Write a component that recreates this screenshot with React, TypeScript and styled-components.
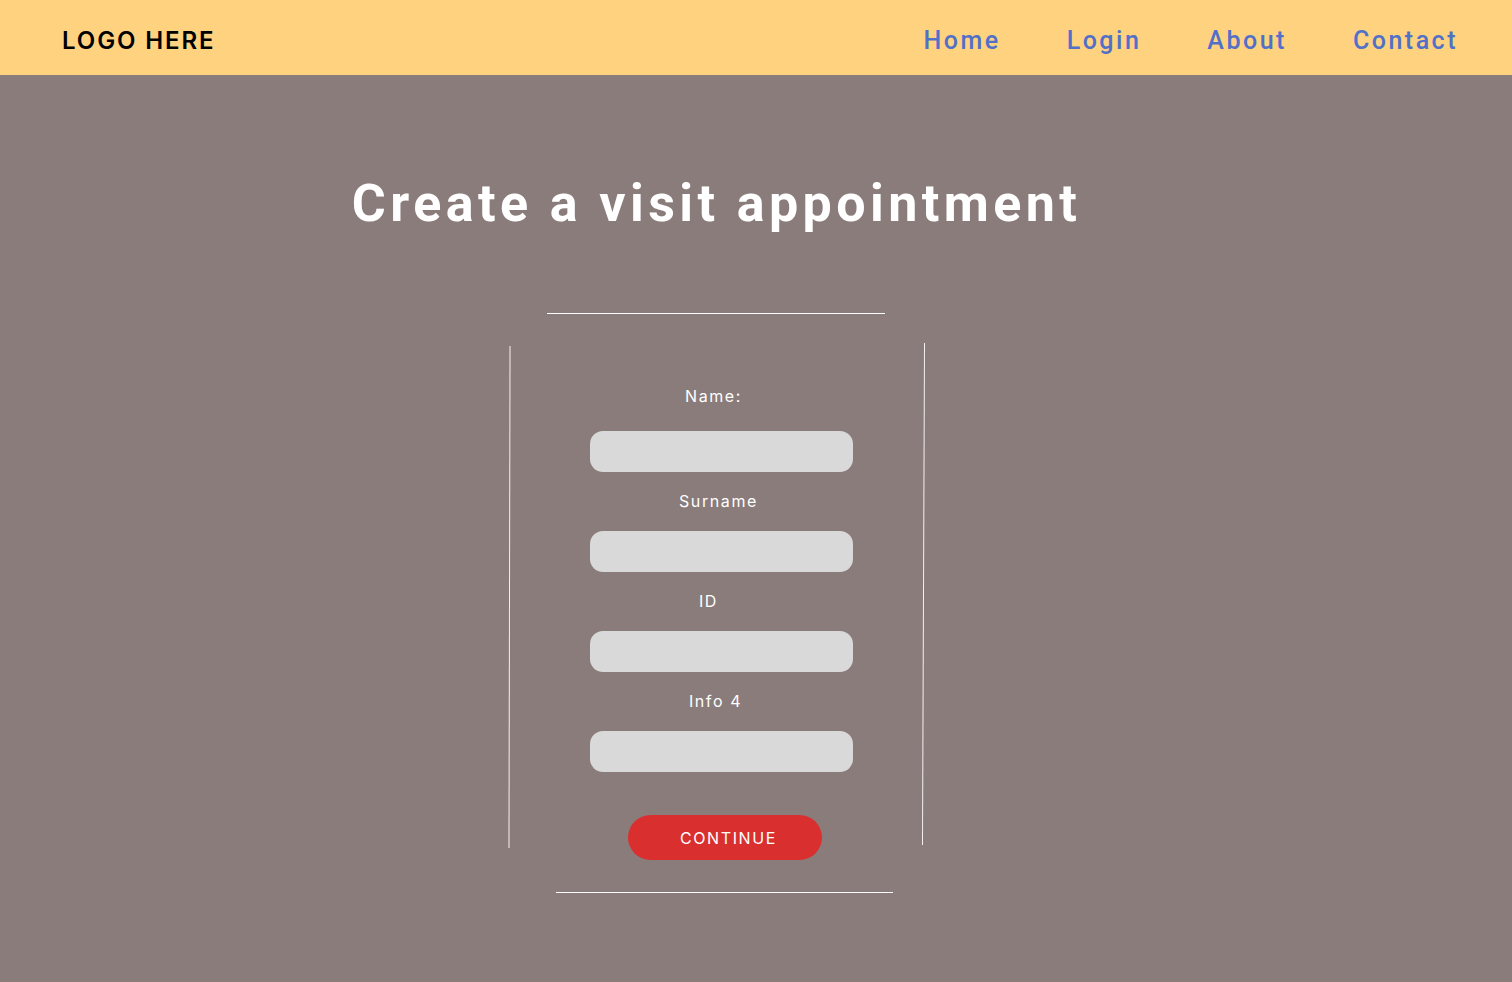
import styled, { createGlobalStyle } from 'styled-components';

const GlobalStyle = createGlobalStyle`
    html, body {
        margin: 0;
        padding: 0;
        background: #8a7c7b;
    }

    * {
        box-sizing: border-box;
    }
`;

const links = ['Home', 'Login', 'About', 'Contact'];

const fields = [
    { label: 'Name:', shift: -8, gap: 25 },
    { label: 'Surname', shift: -3, gap: 20 },
    { label: 'ID', shift: -13, gap: 20 },
    { label: 'Info 4', shift: -6, gap: 20 },
];

export default function App() {
    return (
        <Page>
            <GlobalStyle />
            <Header>
                <Logo>LOGO HERE</Logo>
                <Nav>
                    {links.map(link => (
                        <NavLink key={link} href="#">
                            {link}
                        </NavLink>
                    ))}
                </Nav>
            </Header>
            <Main>
                <Title>Create a visit appointment</Title>
                <Frame>
                    <HRule $offset={38} $width={338} />
                    <FrameBody>
                        <VRule $height={502} $tilt={0.12} $top={3} />
                        <Form>
                            {fields.map(field => (
                                <Field key={field.label} $gap={field.gap}>
                                    <Label $shift={field.shift}>{field.label}</Label>
                                    <Input type="text" />
                                </Field>
                            ))}
                            <Button type="button">CONTINUE</Button>
                        </Form>
                        <VRule $height={502} $tilt={0.23} $top={0} />
                    </FrameBody>
                    <HRule $offset={47} $width={337} />
                </Frame>
            </Main>
        </Page>
    );
}

const Page = styled.div`
    min-height: 982px;
    background: #8a7c7b;
`;

const Header = styled.header`
    height: 75px;
    background: #ffd280;
    display: flex;
    align-items: center;
    justify-content: space-between;
    padding: 5px 54px 0 62px;
`;

const Logo = styled.div`
    font-family: Inter, 'Liberation Sans', sans-serif;
    font-weight: 600;
    font-size: 24px;
    letter-spacing: 1.9px;
    color: #000;
`;

const Nav = styled.nav`
    display: flex;
    gap: 66px;
`;

const NavLink = styled.a`
    font-family: Roboto, 'Liberation Sans', sans-serif;
    font-weight: 500;
    font-size: 25px;
    letter-spacing: 0.1em;
    color: #5170c8;
    text-decoration: none;
`;

const Main = styled.main`
    display: flex;
    flex-direction: column;
    align-items: center;
    padding: 99px 79px 0 0;
`;

const Title = styled.h1`
    margin: 0;
    font-family: Roboto, 'Liberation Sans', sans-serif;
    font-weight: 700;
    font-size: 52px;
    line-height: 60px;
    letter-spacing: 4.4px;
    color: #fff;
`;

const Frame = styled.div`
    width: 415px;
    margin-top: 79px;
    display: flex;
    flex-direction: column;
`;

const HRule = styled.div<{ $offset: number; $width: number }>`
    height: 1px;
    width: ${p => p.$width}px;
    margin-left: ${p => p.$offset}px;
    background: #fff;
`;

const FrameBody = styled.div`
    display: flex;
    align-items: flex-start;
    margin: 29px 0 32px;
`;

const VRule = styled.div<{ $height: number; $tilt: number; $top: number }>`
    width: 1px;
    height: ${p => p.$height}px;
    margin-top: ${p => p.$top}px;
    background: #f4f0f0;
    transform: rotate(${p => p.$tilt}deg);
    flex-shrink: 0;
`;

const Form = styled.form`
    flex: 1;
    display: flex;
    flex-direction: column;
    align-items: center;
    gap: 19px;
    padding: 43px 0 0 10px;
`;

const Field = styled.div<{ $gap: number }>`
    display: flex;
    flex-direction: column;
    align-items: center;
    gap: ${p => p.$gap}px;
`;

const Label = styled.label<{ $shift: number }>`
    font-family: Inter, 'Liberation Sans', sans-serif;
    font-size: 16px;
    line-height: 20px;
    letter-spacing: 0.1em;
    color: #fff;
    transform: translateX(${p => p.$shift}px);
`;

const Input = styled.input`
    width: 263px;
    height: 41px;
    border: none;
    border-radius: 13px;
    background: #d9d9d9;
    outline: none;
`;

const Button = styled.button`
    margin-top: 24px;
    width: 194px;
    height: 45px;
    padding: 0 0 0 8px;
    border: none;
    border-radius: 23px;
    background: #da2f2f;
    color: #fff;
    font-family: Inter, 'Liberation Sans', sans-serif;
    font-size: 16px;
    letter-spacing: 0.1em;
    transform: translateX(3px);
`;
